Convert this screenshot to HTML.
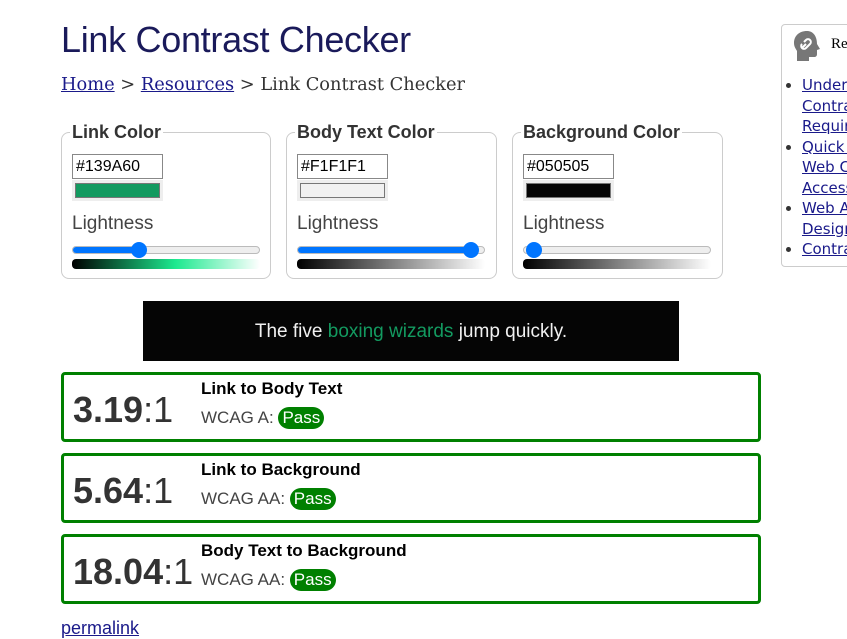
<!DOCTYPE html>
<html><head><meta charset="utf-8"><style>
body{margin:0;width:847px;height:639px;overflow:hidden;background:#fff;font-family:"Liberation Sans",sans-serif;position:relative}
.a{position:absolute}
h1{position:absolute;left:61px;top:19px;margin:0;font-weight:normal;font-size:36px;color:#1a1a5a;letter-spacing:-0.3px}
.bc{left:61px;top:74px;font-family:"DejaVu Serif",serif;font-size:17.8px;color:#333}
.bc a{color:#1a1a8a}
.fs{position:absolute;top:132px;width:210px;height:147px;border:1px solid #ccc;border-radius:8px;box-sizing:border-box}
.lg{position:absolute;left:8px;top:-11px;background:#fff;font-weight:bold;font-size:18px;color:#333;padding:0 2px}
.inp{position:absolute;left:10px;top:21px;width:91px;height:25px;border:1px solid #888;box-sizing:border-box;font-size:16px;padding:3px 0 0 3px;color:#000}
.sw{position:absolute;left:10px;top:47px;width:91px;height:21px;background:#eee;padding:3px;box-sizing:border-box}
.sw div{width:100%;height:100%;border:1px solid #777;box-sizing:border-box}
.lt{position:absolute;left:10px;top:80px;font-size:19px;color:#444}
.tr{position:absolute;left:10px;top:113px;width:188px;height:8px;border:1px solid #bbb;border-radius:5px;background:#eee;box-sizing:border-box}
.fill{position:absolute;left:0;top:0;height:100%;background:#0075ff;border-radius:4px}
.th{position:absolute;top:-5px;width:16px;height:16px;border-radius:50%;background:#0075ff;margin-left:-8px}
.gr{position:absolute;left:10px;top:126px;width:188px;height:10px;border-radius:4px}
.sample{left:143px;top:301px;width:536px;height:60px;background:#050505;color:#f1f1f1;font-size:19px;text-align:center;line-height:61px}
.box{position:absolute;left:61px;width:700px;height:70px;border:3px solid #008000;border-radius:4px;box-sizing:border-box}
.r{position:absolute;left:9px;top:14px;font-size:36px;color:#333}
.r b{font-weight:bold}
.t{position:absolute;left:137px;top:4px;font-weight:bold;font-size:17px}
.w{position:absolute;left:137px;top:32px;font-size:17px;color:#444}
.p{display:inline-block;background:#008000;color:#fff;border-radius:12px;padding:1px 4px;font-size:17px}
.side{left:781px;top:24px;width:80px;height:243px;border:1px solid #ccc;border-radius:4px;box-sizing:border-box}
.clip{left:0;top:0;width:847px;height:639px;overflow:hidden}
.side ul{margin:0;padding:0 0 0 20px;position:absolute;top:50px;font-family:"DejaVu Sans",sans-serif;font-size:15px;line-height:20.5px;width:140px;white-space:nowrap}
.side li{color:#333}
.side a{color:#1a1a8a}
</style></head><body>
<h1>Link Contrast Checker</h1>
<div class="a bc"><a href="#">Home</a> &gt; <a href="#">Resources</a> &gt; Link Contrast Checker</div>

<div class="fs" style="left:61px"><div class="lg">Link Color</div>
<div class="inp">#139A60</div><div class="sw"><div style="background:#139a60"></div></div>
<div class="lt">Lightness</div>
<div class="tr"><div class="fill" style="width:66px"></div><div class="th" style="left:66px"></div></div>
<div class="gr" style="background:linear-gradient(90deg,#000,#1de98f 55%,#fff)"></div>
</div>
<div class="fs" style="left:286px;width:211px"><div class="lg">Body Text Color</div>
<div class="inp">#F1F1F1</div><div class="sw"><div style="background:#f1f1f1"></div></div>
<div class="lt">Lightness</div>
<div class="tr"><div class="fill" style="width:173px"></div><div class="th" style="left:173px"></div></div>
<div class="gr" style="background:linear-gradient(90deg,#000,#fff)"></div>
</div>
<div class="fs" style="left:512px;width:211px"><div class="lg">Background Color</div>
<div class="inp">#050505</div><div class="sw"><div style="background:#050505"></div></div>
<div class="lt">Lightness</div>
<div class="tr"><div class="th" style="left:10px"></div></div>
<div class="gr" style="background:linear-gradient(90deg,#000,#fff)"></div>
</div>

<div class="a sample">The five <span style="color:#139a60">boxing wizards</span> jump quickly.</div>

<div class="box" style="top:372px"><div class="r"><b>3.19</b>:1</div><div class="t">Link to Body Text</div><div class="w">WCAG A: <span class="p">Pass</span></div></div>
<div class="box" style="top:453px"><div class="r"><b>5.64</b>:1</div><div class="t">Link to Background</div><div class="w">WCAG AA: <span class="p">Pass</span></div></div>
<div class="box" style="top:534px"><div class="r"><b>18.04</b>:1</div><div class="t">Body Text to Background</div><div class="w">WCAG AA: <span class="p">Pass</span></div></div>

<a class="a" href="#" style="left:61px;top:618px;font-size:18px;color:#1a1a8a">permalink</a>

<div class="a clip">
<div class="a side">
<svg class="a" style="left:10px;top:5px" width="30" height="32" viewBox="0 0 30 32"><path d="M15 1C7 1 2 6 2 13c0 4 2 6 3 8v10h12v-4h5c2 0 3-1 3-3v-4l3-1-3-5C25 6 21 1 15 1z" fill="#777"/><path d="M10 18l4-4M12 12l2-2a2.5 2.5 0 014 4l-2 2M16 16l-2 2a2.5 2.5 0 01-4-4" stroke="#fff" stroke-width="2" fill="none"/></svg>
<div class="a" style="left:49px;top:11px;font-family:'Liberation Serif',serif;font-size:15px">Re</div>
<ul>
<li><a href="#">Understanding<br>Contrast<br>Requirements</a></li>
<li><a href="#">Quick Guide<br>Web Color<br>Accessibility</a></li>
<li><a href="#">Web Accessible<br>Design</a></li>
<li><a href="#">Contrast</a></li>
</ul></div></div>
</body></html>
